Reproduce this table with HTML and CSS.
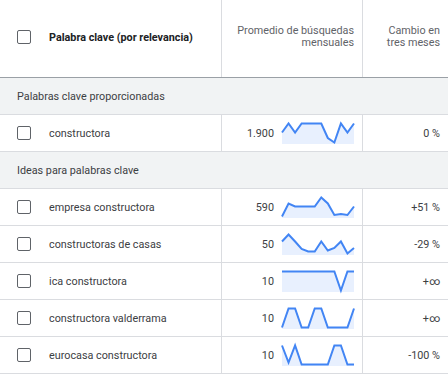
FILE: index.html
```html
<!DOCTYPE html>
<html lang="es">
<head>
<meta charset="utf-8">
<link rel="stylesheet" href="styles.css">
</head>
<body>
<div class="table">
  <div class="row head">
    <div class="cell kw"><span class="cb"></span><span class="title">Palabra clave (por relevancia)</span></div>
    <div class="cell num-head">Promedio de búsquedas<br>mensuales</div>
    <div class="cell chg-head">Cambio en<br>tres meses</div>
  </div>

  <div class="section">Palabras clave proporcionadas</div>

  <div class="row">
    <div class="cell kw"><span class="cb"></span><span>constructora</span></div>
    <div class="cell vol"><span>1.900</span>
      <svg class="spark" viewBox="0 0 72 22"><polygon class="fill" points="0,10.5 6.55,1.5 13.09,10.5 19.64,1.5 26.18,1.5 32.73,1.5 39.27,1.5 45.82,16 52.36,20.5 58.91,1.5 65.45,10.5 72,1.5 72,22 0,22"/><polyline class="line" points="0,10.5 6.55,1.5 13.09,10.5 19.64,1.5 26.18,1.5 32.73,1.5 39.27,1.5 45.82,16 52.36,20.5 58.91,1.5 65.45,10.5 72,1.5"/></svg>
    </div>
    <div class="cell chg">0 %</div>
  </div>

  <div class="section">Ideas para palabras clave</div>

  <div class="row">
    <div class="cell kw"><span class="cb"></span><span>empresa constructora</span></div>
    <div class="cell vol"><span>590</span>
      <svg class="spark" viewBox="0 0 72 22"><polygon class="fill" points="0,20.5 6.55,7.5 13.09,10.5 19.64,10.5 26.18,10.5 32.73,10.5 39.27,1.5 45.82,7.5 52.36,19 58.91,18 65.45,19 72,10.5 72,22 0,22"/><polyline class="line" points="0,20.5 6.55,7.5 13.09,10.5 19.64,10.5 26.18,10.5 32.73,10.5 39.27,1.5 45.82,7.5 52.36,19 58.91,18 65.45,19 72,10.5"/></svg>
    </div>
    <div class="cell chg">+51 %</div>
  </div>

  <div class="row">
    <div class="cell kw"><span class="cb"></span><span>constructoras de casas</span></div>
    <div class="cell vol"><span>50</span>
      <svg class="spark" viewBox="0 0 72 22"><polygon class="fill" points="0,8.5 6.55,1.5 13.09,8.5 19.64,16 26.18,18.5 32.73,18.5 39.27,8.5 45.82,17.5 52.36,15 58.91,8.5 65.45,20.5 72,15 72,22 0,22"/><polyline class="line" points="0,8.5 6.55,1.5 13.09,8.5 19.64,16 26.18,18.5 32.73,18.5 39.27,8.5 45.82,17.5 52.36,15 58.91,8.5 65.45,20.5 72,15"/></svg>
    </div>
    <div class="cell chg">-29 %</div>
  </div>

  <div class="row">
    <div class="cell kw"><span class="cb"></span><span>ica constructora</span></div>
    <div class="cell vol"><span>10</span>
      <svg class="spark" viewBox="0 0 72 22"><polygon class="fill" points="0,1.5 52.36,1.5 58.91,20.5 65.45,1.5 72,1.5 72,22 0,22"/><polyline class="line" points="0,1.5 52.36,1.5 58.91,20.5 65.45,1.5 72,1.5"/></svg>
    </div>
    <div class="cell chg">+∞</div>
  </div>

  <div class="row">
    <div class="cell kw"><span class="cb"></span><span>constructora valderrama</span></div>
    <div class="cell vol"><span>10</span>
      <svg class="spark" viewBox="0 0 72 22"><polygon class="fill" points="0,20.5 6.55,1.5 13.09,1.5 19.64,20.5 26.18,20.5 32.73,1.5 39.27,1.5 45.82,20.5 52.36,20.5 58.91,20.5 65.45,20.5 72,1.5 72,22 0,22"/><polyline class="line" points="0,20.5 6.55,1.5 13.09,1.5 19.64,20.5 26.18,20.5 32.73,1.5 39.27,1.5 45.82,20.5 52.36,20.5 58.91,20.5 65.45,20.5 72,1.5"/></svg>
    </div>
    <div class="cell chg">+∞</div>
  </div>

  <div class="row">
    <div class="cell kw"><span class="cb"></span><span>eurocasa constructora</span></div>
    <div class="cell vol"><span>10</span>
      <svg class="spark" viewBox="0 0 72 22"><polygon class="fill" points="0,1.5 6.55,18.5 13.09,1.5 19.64,20.5 26.18,20.5 32.73,20.5 39.27,20.5 45.82,20.5 52.36,1.5 58.91,1.5 65.45,20.5 72,20.5 72,22 0,22"/><polyline class="line" points="0,1.5 6.55,18.5 13.09,1.5 19.64,20.5 26.18,20.5 32.73,20.5 39.27,20.5 45.82,20.5 52.36,1.5 58.91,1.5 65.45,20.5 72,20.5"/></svg>
    </div>
    <div class="cell chg">-100 %</div>
  </div>
</div>
</body>
</html>
```

FILE: styles.css
```css
body {
  margin: 0;
  background: #ffffff;
  font-family: Roboto, "Liberation Sans", sans-serif;
  font-size: 10.8px;
  color: #3c4043;
}

.table {
  width: 448px;
}

.row {
  display: grid;
  grid-template-columns: 222px 141px 85px;
  height: 37px;
  box-sizing: border-box;
  border-bottom: 1px solid #dadce0;
}

.head {
  height: 78px;
  border-bottom: 1px solid #9aa0a6;
}

.head .cell {
  padding-bottom: 3px;
}

.cell {
  display: flex;
  align-items: center;
  box-sizing: border-box;
  border-right: 1px solid #dadce0;
}

.cell:last-child {
  border-right: none;
}

.kw {
  padding-left: 17px;
  gap: 18px;
}

.cb {
  flex: none;
  width: 14px;
  height: 14px;
  box-sizing: border-box;
  border: 1.5px solid #5f6368;
  border-radius: 2px;
}

.title {
  font-weight: 700;
  color: #202124;
}

.num-head,
.chg-head {
  justify-content: flex-end;
  text-align: right;
  padding-right: 8px;
  color: #5f6368;
  line-height: 12.5px;
}

.vol {
  justify-content: flex-end;
  padding-right: 8px;
  gap: 8px;
}

.chg {
  justify-content: flex-end;
  padding-right: 8px;
}

.spark {
  width: 72px;
  height: 22px;
  overflow: visible;
}

.spark .fill {
  fill: #e8f0fe;
}

.spark .line {
  fill: none;
  stroke: #4285f4;
  stroke-width: 2;
  stroke-linejoin: miter;
}

.section {
  height: 37px;
  box-sizing: border-box;
  display: flex;
  align-items: center;
  padding-left: 17px;
  background: #f1f3f4;
  border-bottom: 1px solid #dadce0;
}
```
